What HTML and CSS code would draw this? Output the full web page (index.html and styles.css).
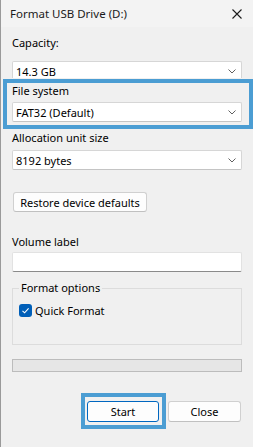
FILE: index.html
```html
<!DOCTYPE html>
<html lang="en">
  <head>
    <meta charset="utf-8" />
    <title>Format USB Drive (D:)</title>
    <link rel="stylesheet" href="styles.css">
  </head>

  <body>
    <!-- Title bar -->
    <div class="titlebar">
      <span class="title">Format USB Drive (D:)</span>
      <svg class="close-x" width="10" height="10" viewBox="0 0 10 10">
        <path d="M0.5 0.5 L9.5 9.5 M9.5 0.5 L0.5 9.5" stroke="#1b1b1b" stroke-width="1.1" fill="none" />
      </svg>
    </div>

    <div class="content">
      <div class="label first">Capacity:</div>
      <div class="combo short">
        <span>14.3 GB</span>
        <svg class="chev" width="8" height="5" viewBox="0 0 8 5"><path d="M0.5 0.5 L4 4 L7.5 0.5" stroke="#606060" fill="none" /></svg>
      </div>

      <!-- highlighted -->
      <div class="highlight">
        <div class="label">File system</div>
        <div class="combo tight">
          <span>FAT32 (Default)</span>
          <svg class="chev" width="8" height="5" viewBox="0 0 8 5"><path d="M0.5 0.5 L4 4 L7.5 0.5" stroke="#606060" fill="none" /></svg>
        </div>
      </div>

      <div class="label after-hl">Allocation unit size</div>
      <div class="combo">
        <span>8192 bytes</span>
        <svg class="chev" width="8" height="5" viewBox="0 0 8 5"><path d="M0.5 0.5 L4 4 L7.5 0.5" stroke="#606060" fill="none" /></svg>
      </div>

      <button class="btn restore" type="button">Restore device defaults</button>

      <div class="label volume">Volume label</div>
      <div class="textbox"></div>

      <fieldset class="options">
        <legend>Format options</legend>
        <div class="check-row">
          <span class="checkbox">
            <svg width="13" height="13" viewBox="0 0 13 13"><path d="M3.5 6.8 L5.6 8.8 L9.6 4.4" stroke="#fff" stroke-width="1.1" fill="none" /></svg>
          </span>
          <span>Quick Format</span>
        </div>
      </fieldset>

      <div class="progress"></div>

      <div class="actions">
        <div class="highlight-btn">
          <button class="btn primary" type="button">Start</button>
        </div>
        <button class="btn close-btn" type="button">Close</button>
      </div>
    </div>
  </body>
</html>
```

FILE: styles.css
```css
body {
  margin: 0;
  width: 252px;
  height: 447px;
  background-color: #f0f0f0;
  border-left: 1px solid #9a9a9a;
  font-family: "Noto Sans", "Liberation Sans", sans-serif;
  font-size: 11px;
  color: #000;
  overflow: hidden;
}
.titlebar {
  height: 27px;
  display: flex;
  align-items: center;
  justify-content: space-between;
  padding: 0 11px 0 9px;
  background-color: #f3f3f3;
}
.title {
  font-size: 11.5px;
  color: #1a1a1a;
  margin-top: -1px;
}
.close-x {
  margin-top: 1px;
}
.content {
  padding: 0 11px 0 11px;
}
.label {
  line-height: 16px;
  height: 16px;
}
.label.first {
  margin-top: 8px;
  margin-bottom: 10px;
}
.combo {
  box-sizing: border-box;
  height: 20px;
  background-color: #fff;
  border: 1px solid #d6d6d6;
  border-bottom-color: #c4c4c4;
  border-radius: 2px;
  display: flex;
  align-items: center;
  justify-content: space-between;
  padding: 0 5px 0 3px;
}
.combo.short {
  height: 17px;
  border-bottom: none;
  border-radius: 2px 2px 0 0;
  padding-top: 3px;
}
.combo.tight {
  margin-top: 3px;
}
.label.after-hl {
  margin-top: 1px;
  margin-bottom: 4px;
}
.highlight {
  margin: 1px -11px 0 -9px;
  border: 4px solid #4b9dd3;
  padding: 0 7px 3px 5px;
}
.btn {
  box-sizing: border-box;
  height: 20px;
  font-family: inherit;
  font-size: 11px;
  color: #000;
  background-color: #fdfdfd;
  border: 1px solid #d0d0d0;
  border-bottom-color: #c0c0c0;
  border-radius: 3px;
  padding: 0;
}
.restore {
  display: block;
  margin-top: 22px;
  margin-left: 1px;
  width: 134px;
}
.label.volume {
  margin-top: 22px;
  margin-bottom: 2px;
}
.textbox {
  box-sizing: border-box;
  height: 20px;
  background-color: #fff;
  border: 1px solid #e2e2e2;
  border-bottom: 1px solid #8a8a8a;
  border-radius: 2px;
}
.options {
  margin: 8px 0 0 0;
  padding: 0 0 27px 6px;
  border: 1px solid #dcdcdc;
  min-width: 0;
}
.options legend {
  padding: 0 2px;
  line-height: 16px;
  margin-left: 0;
}
.check-row {
  display: flex;
  align-items: center;
  gap: 3px;
  margin-top: 8px;
  height: 13px;
}
.checkbox {
  width: 13px;
  height: 13px;
  border-radius: 3px;
  background-color: #005fb8;
  display: flex;
}
.progress {
  box-sizing: border-box;
  height: 13px;
  margin-top: 14px;
  background-color: #e6e6e6;
  border: 1px solid #bcbcbc;
}
.actions {
  display: flex;
  justify-content: flex-end;
  align-items: center;
  margin-top: 21px;
  padding-right: 1px;
}
.highlight-btn {
  border: 4px solid #4b9dd3;
  padding: 4px 3px 3px 2px;
}
.primary {
  width: 72px;
  height: 21px;
  border: 1px solid #0067c0;
}
.close-btn {
  width: 73px;
  height: 21px;
  margin-left: 2px;
}
```
